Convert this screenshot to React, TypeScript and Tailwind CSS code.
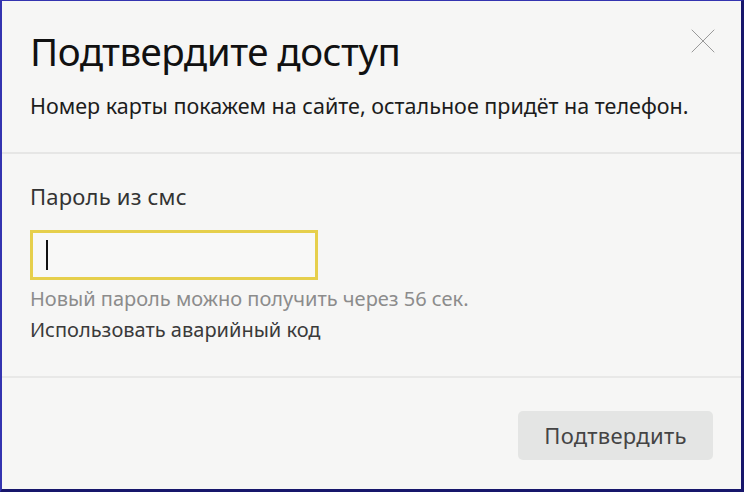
import { X } from 'lucide-react'

export default function App() {
  return (
    <div className="h-[492px] w-[744px] border-b-[3px] border-l-2 border-r-[3px] border-t border-b-[#17166b] border-l-[#3434b0] border-r-[#17166b] border-t-[#3434b0] bg-[#f6f6f5] font-['Noto_Sans',sans-serif]">
      <div className="flex h-full flex-col">
        <header className="relative h-[151px] shrink-0 px-[28px] pt-[26px]">
          <h1 className="text-[38.5px] leading-[48px] tracking-[-0.5px] text-[#111]">Подтвердите доступ</h1>
          <p className="mt-[17px] text-[21.5px] leading-[28px] text-[#1c1c1c]">
            Номер карты покажем на сайте, остальное придёт на телефон.
          </p>
          <button className="absolute right-[16px] top-[18px] text-[#999]">
            <X size={44} strokeWidth={1} absoluteStrokeWidth />
          </button>
        </header>

        <div className="h-[2px] bg-[#e6e6e5]" />

        <section className="h-[222px] shrink-0 px-[28px] pt-[27px]">
          <div className="text-[22px] leading-[30px] tracking-[0.2px] text-[#333]">Пароль из смс</div>
          <div className="mt-[19px] flex h-[50px] w-[288px] items-center border-[3px] border-[#e6cf4c] bg-[#f8f8f7] px-[13px]">
            <span className="h-[30px] w-[2px] bg-[#111]" />
          </div>
          <div className="mt-[5px] text-[20px] leading-[28px] text-[#8c8c8c]">
            Новый пароль можно получить через 56 сек.
          </div>
          <a className="mt-[3px] block text-[20px] leading-[28px] text-[#3a3a3a]">Использовать аварийный код</a>
        </section>

        <div className="h-[2px] bg-[#e8e8e7]" />

        <footer className="flex flex-1 items-start justify-end px-[28px] pt-[33px]">
          <button className="h-[49px] w-[195px] rounded-[5px] bg-[#e4e5e4] text-[22px] tracking-[0.3px] text-[#444]">
            Подтвердить
          </button>
        </footer>
      </div>
    </div>
  )
}
